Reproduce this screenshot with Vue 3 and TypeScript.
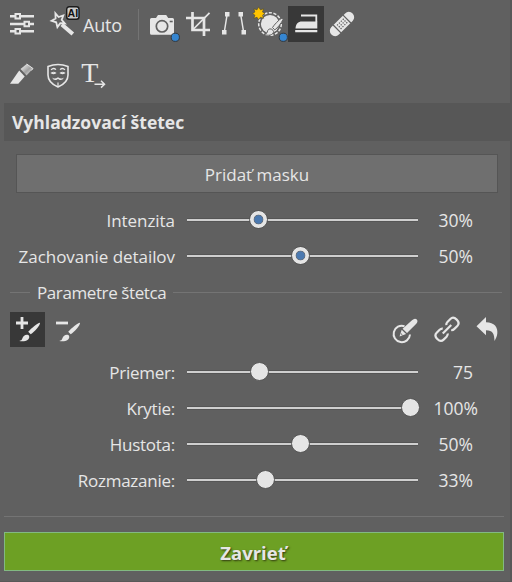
<script setup lang="ts">
import { ref } from 'vue'

interface Slider {
  label: string
  value: string
  position: number
  mask?: boolean
  wide?: boolean
}

const effect = ref<Slider[]>([
  { label: 'Intenzita', value: '30%', position: 29, mask: true },
  { label: 'Zachovanie detailov', value: '50%', position: 48.6, mask: true },
])

const brush = ref<Slider[]>([
  { label: 'Priemer:', value: '75', position: 29.3 },
  { label: 'Krytie:', value: '100%', position: 99.6, wide: true },
  { label: 'Hustota:', value: '50%', position: 48.6 },
  { label: 'Rozmazanie:', value: '33%', position: 32.1 },
])
</script>

<template>
  <main class="panel">
    <nav class="toolbar">
      <button class="tool">
        <svg viewBox="0 0 36 36" class="line">
          <path d="M6 10.2H11M16.5 10.2H30M6 18H20M25.5 18H30M6 25.3H11M16.5 25.3H30" stroke-width="2.6" />
          <path d="M11.5 8h4.5v4.5h-4.500zM20.500 15.800H25v4.400h-4.500zM11.500 23H16v4.500h-4.500z" stroke-width="2" />
        </svg>
      </button>
      <button class="auto">
        <svg viewBox="0 0 36 36" class="wand">
          <path d="M9.4 7.3l3.2 3.7 4.7-1.5-1.6 4.4 3.1 3.5-4.5-.3-2.9 4-1.2-4.8-4.6-1.5 4-2.4z" class="stroke" stroke-width="1.8" />
          <path d="M15.8 18.500L26.800 28" class="stroke" stroke-width="4" />
          <rect x="20.700" y=".7" width="12.300" height="12.600" rx="2.500" fill="#c9c9c9" stroke="#1b1b1b" stroke-width="1.400" />
          <text x="26.800" y="10.700" text-anchor="middle" class="ai">AI</text>
        </svg>
        <span>Auto</span>
      </button>
      <i class="sep"></i>
      <button class="tool">
        <svg viewBox="0 0 36 36">
          <path d="M7.5 12H12l2-3h8.2l2 3h4.3q1.5 0 1.5 1.5v13.7q0 1.500-1.500 1.500h-21Q6 28.700 6 27.200V13.500Q6 12 7.500 12z" class="fill" />
          <circle cx="18" cy="20.300" r="5.700" class="fill" stroke="#606060" stroke-width="1.700" />
          <path d="M25.700 15.500h3" stroke="#606060" stroke-width="1.600" />
          <circle cx="31.300" cy="31.300" r="4.100" class="dot" />
        </svg>
      </button>
      <button class="tool">
        <svg viewBox="0 0 36 36" class="line">
          <path d="M12.500 6V24H30M6 12H24V30" stroke-width="2.700" />
          <path d="M13 23.500L29.500 6.800" stroke-width="1.700" />
        </svg>
      </button>
      <button class="tool">
        <svg viewBox="0 0 36 36">
          <path d="M11.200 8L8.300 26M24.600 8l3 18" class="stroke" stroke-width="1.500" />
          <path d="M9 6h4.500v4.500H9zM22.500 6H27v4.500h-4.500zM6 24h4.500v4.500H6zM25.500 24H30v4.500h-4.500z" class="fill" />
        </svg>
      </button>
      <button class="tool">
        <svg viewBox="0 0 36 36">
          <circle cx="18" cy="18" r="11.300" class="stroke" stroke-width="1.500" stroke-dasharray="3.200 1.500" />
          <circle cx="18" cy="18" r="9.100" class="fill" />
          <path d="M30 12c-3 1.500-8 7-9.500 9.500l2.300 2.400C25.500 22 29.500 17 31 13.500zM19.700 23c-3-.5-4 .8-4.500 3.200-.3 1.300-1.300 1.800-3.200 2.200 4 1.700 9.500 1 9.600-3.100z" class="fill" stroke="#606060" stroke-width="1" />
          <path d="M6.700 .8L8.400 3.800 11.700 2.800 10.500 6 13 7.500 10.500 9.200 11.700 12.300 8.400 11.300 6.700 13.800 5 11.300 1.800 12.300 2.900 9.200.5 7.500 2.900 6 1.800 2.800 5 3.800z" fill="#ffc400" stroke="#55502f" stroke-width=".7" />
          <circle cx="31.300" cy="31.300" r="4.100" class="dot" />
        </svg>
      </button>
      <button class="tool active">
        <svg viewBox="0 0 36 36">
          <path d="M13 9.500H28.300V16" class="stroke" stroke-width="1.800" />
          <path d="M7.500 22.500c.3-4.500 2.500-7 6.500-7h15.300v7zM7.200 24h22.100v2.200H7.200z" class="fill" />
        </svg>
      </button>
      <button class="tool">
        <svg viewBox="0 0 36 36">
          <g transform="rotate(-45 18 18)">
            <rect x="3" y="12.700" width="30" height="10.600" rx="5.300" class="fill" />
            <path d="M11 12.500v11M25 12.500v11" stroke="#606060" stroke-width="1.300" />
            <path d="M13.500 15.500h10M13.500 18h10M13.500 20.500h10" stroke="#606060" stroke-width="1.300" stroke-dasharray="1.300 1.400" />
          </g>
        </svg>
      </button>
    </nav>

    <nav class="toolbar second">
      <button class="tool">
        <svg viewBox="0 0 36 36">
          <defs>
            <linearGradient id="ferrule" x1="0" y1="0" x2="1" y2="1">
              <stop offset=".1" stop-color="#f0f0f0" />
              <stop offset=".55" stop-color="#a0a0a0" />
              <stop offset="1" stop-color="#f0f0f0" />
            </linearGradient>
          </defs>
          <path d="M16.500 12L22.700 7l6.300 4.500-6.500 7z" fill="url(#ferrule)" />
          <path d="M22.700 7l6.300 4.500-1.700 2" class="stroke" stroke-width="1" />
          <path d="M15.200 13.500l5.500 6-6.400 7.200H6z" class="fill" />
        </svg>
      </button>
      <button class="tool">
        <svg viewBox="0 0 36 36" class="line">
          <path d="M8 9.500Q18 5.500 28 9.500V18c0 6-4 9.500-10 12-6-2.500-10-6-10-12z" stroke-width="1.600" />
          <path d="M11 12.800q2.500-2.500 5-.2M20 12.600q2.500-2.300 5 .2M11.500 16q2.200-1.500 4 0-2 1.300-4 0zM20.500 16q2-1.500 4 0-2 1.300-4 0zM18 25.500V30" stroke-width="1.200" />
          <path d="M12 20.500q2.500 2.200 6-.3 3.500 2.500 6 .3-1.500 3-4.200 2.400L18 22l-1.800.9q-2.700.6-4.200-2.400z" class="fill" stroke="none" />
        </svg>
      </button>
      <button class="tool">
        <svg viewBox="0 0 36 36">
          <text x="13.700" y="25.300" text-anchor="middle" class="letter">T</text>
          <path d="M18.500 27.200H28.500M25 23.800l3.500 3.400-3.500 3.400" class="stroke" stroke-width="1.500" />
        </svg>
      </button>
    </nav>

    <h1>Vyhladzovací štetec</h1>
    <button class="add-mask"><span>Pridať masku</span></button>

    <section class="sliders">
      <div v-for="s in effect" :key="s.label" class="row">
        <label>{{ s.label }}</label>
        <div class="track">
          <div class="knob mask" :style="{ marginLeft: s.position + '%' }"></div>
        </div>
        <output>{{ s.value }}</output>
      </div>
    </section>

    <h2><span>Parametre štetca</span></h2>

    <div class="modes">
      <button class="mode active">
        <svg viewBox="0 0 35 35">
          <path d="M6 11h12M12 5v12" class="stroke" stroke-width="2.800" />
          <path d="M30 10.700c.5 2.500-5.500 9-9.300 11.600l-2.500-2.500C21.500 16 27.500 11 30 10.700zM17.500 22.700c2.500.6 2.200 3.500.3 5-2.200 1.700-5.500 1.800-8.600 1.200 2-.4 2.500-.9 3.200-2.700 1-2.400 2.600-3.800 5.100-3.500z" class="fill" />
        </svg>
      </button>
      <button class="mode">
        <svg viewBox="0 0 35 35">
          <path d="M6 11h12" class="stroke" stroke-width="2.800" />
          <path d="M30 10.700c.5 2.500-5.500 9-9.300 11.600l-2.500-2.500C21.500 16 27.500 11 30 10.700zM17.500 22.700c2.500.6 2.200 3.500.3 5-2.200 1.700-5.500 1.800-8.600 1.200 2-.4 2.500-.9 3.200-2.700 1-2.400 2.600-3.800 5.100-3.500z" class="fill" />
        </svg>
      </button>
      <div class="actions">
        <button class="tool">
          <svg viewBox="0 0 36 36">
            <path d="M17.500 14.200A8.200 8.200 0 1 0 23 22.500" class="stroke" stroke-width="2" />
            <path d="M25 8.200Q28 5.500 29.800 7.600 31.500 9.800 28.800 12.300L20 21l-4.400-4.200z" class="fill" />
            <path d="M14.700 17.700l4.400 4.200-6.600 2.500z" class="fill" />
            <path d="M13.700 21.300l1.800 1.800" stroke="#606060" stroke-width="1" />
          </svg>
        </button>
        <button class="tool link">
          <svg viewBox="0 0 36 36" class="line">
            <g transform="rotate(-45 18 17.300)" stroke-width="2.200">
              <path d="M15.500 20.800Q14.500 22.200 12.500 22.200H8.300q-4 0-4-4.900t4-4.900h4.200q2 0 3 1.400M20.500 20.800q1 1.400 3 1.400h4.200q4 0 4-4.900t-4-4.900h-4.200q-2 0-3 1.400M12 17.300h12" />
            </g>
          </svg>
        </button>
        <button class="tool">
          <svg viewBox="0 0 36 36">
            <path d="M7.500 14.300L17 5v5.300c8.500.2 12 5 11.300 11.300-.3 3-1.500 5.500-2.800 7.400-.2-7.500-1.500-10.500-8.500-10.800v5z" class="fill" />
          </svg>
        </button>
      </div>
    </div>

    <section class="sliders brush">
      <div v-for="s in brush" :key="s.label" class="row">
        <label>{{ s.label }}</label>
        <div class="track">
          <div class="knob" :style="{ marginLeft: s.position + '%' }"></div>
        </div>
        <output :class="{ wide: s.wide }">{{ s.value }}</output>
      </div>
    </section>

    <hr />
    <button class="close"><span>Zavrieť</span></button>
  </main>
</template>

<style>
body {
  background: #606060;
}
</style>

<style scoped>
* {
  box-sizing: border-box;
}
.panel {
  width: 512px;
  height: 582px;
  padding: 6px 0 0 4px;
  display: flex;
  flex-direction: column;
  background: #606060;
  border-right: 2px solid #585858;
  border-bottom: 1px solid #585858;
  color: #e6e6e6;
  font: 17px/24px 'Open Sans', 'Noto Sans', sans-serif;
}
button {
  padding: 0;
  border: 0;
  background: none;
  color: inherit;
  font: inherit;
}
svg {
  display: block;
  width: 36px;
  height: 36px;
  overflow: visible;
}
.fill {
  fill: #e6e6e6;
}
.stroke,
.line {
  fill: none;
  stroke: #e6e6e6;
}
.dot {
  fill: #3585d0;
  stroke: #303840;
  stroke-width: 1;
}
.ai {
  font: bold 10.5px 'Liberation Sans', sans-serif;
  fill: #111;
}
.letter {
  font: 28px 'Liberation Serif', serif;
  fill: #e6e6e6;
}
.toolbar {
  display: flex;
  height: 36px;
}
.tool {
  width: 36px;
  height: 36px;
}
.active {
  background: #383838;
}
.auto {
  display: flex;
  width: 98px;
  padding-left: 6px;
}
.auto span {
  margin-left: 1px;
  font-size: 18px;
  line-height: 38px;
  letter-spacing: -0.2px;
}
.sep {
  width: 1px;
  height: 31px;
  margin: 3px 5px 0 0;
  background: #747474;
}
.second {
  margin-top: 15px;
}
h1 {
  width: 506px;
  height: 38px;
  margin: 10px 0 0;
  padding-left: 8px;
  background: #575757;
  font-size: 17.5px;
  font-weight: 700;
  line-height: 39px;
}
.add-mask {
  width: 482px;
  height: 39px;
  margin: 13px 0 9px 12px;
  background: #6f6f6f;
  border: 1px solid #555;
}
.add-mask span {
  position: relative;
  top: 1px;
}
.row {
  display: flex;
  align-items: center;
  height: 36px;
}
label {
  width: 171px;
  padding-top: 2px;
  text-align: right;
  white-space: nowrap;
  letter-spacing: -0.05px;
}
.brush label {
  letter-spacing: -0.25px;
}
.track {
  display: flex;
  align-items: center;
  width: 231px;
  height: 4px;
  margin: 0 0 1px 12px;
  padding-right: 16px;
  background: #cfcfcf;
  border: solid #555;
  border-width: 1px 0;
}
.knob {
  flex: none;
  width: 19px;
  height: 19px;
  margin-right: -19px;
  border: 1px solid #555;
  border-radius: 50%;
  background: #e5e5e5;
}
.knob.mask {
  background: radial-gradient(circle, #4b79b0 3.7px, #67707b 4.5px, #e5e5e5 5.2px);
}
output {
  width: 55px;
  text-align: right;
  font-size: 17.5px;
}
output.wide {
  width: 60px;
}
h2 {
  display: flex;
  align-items: center;
  gap: 7px;
  height: 37px;
  margin: 0 8px 0 6px;
  font-size: 17px;
  font-weight: 400;
  letter-spacing: -0.4px;
}
h2::before,
h2::after {
  content: '';
  width: 20px;
  height: 1px;
  background: #747474;
}
h2::after {
  flex: 1;
}
.modes {
  display: flex;
  gap: 5px;
  height: 35px;
  margin: 1px 0 7px 6px;
}
.mode,
.mode svg {
  width: 35px;
  height: 35px;
}
.actions {
  display: flex;
  margin-left: 297px;
}
.link {
  margin: 0 4px 0 6px;
}
hr {
  width: 500px;
  height: 1px;
  margin: 18px 0 15px;
  border: 0;
  background: #747474;
}
.close {
  width: 500px;
  height: 39px;
  background: #6da024;
  border: 1px solid #82b982;
  font-size: 18.5px;
  font-weight: 700;
  text-shadow: 1px 1px 2px #303810;
}
.close span {
  position: relative;
  top: 1px;
  left: -1px;
}
</style>
